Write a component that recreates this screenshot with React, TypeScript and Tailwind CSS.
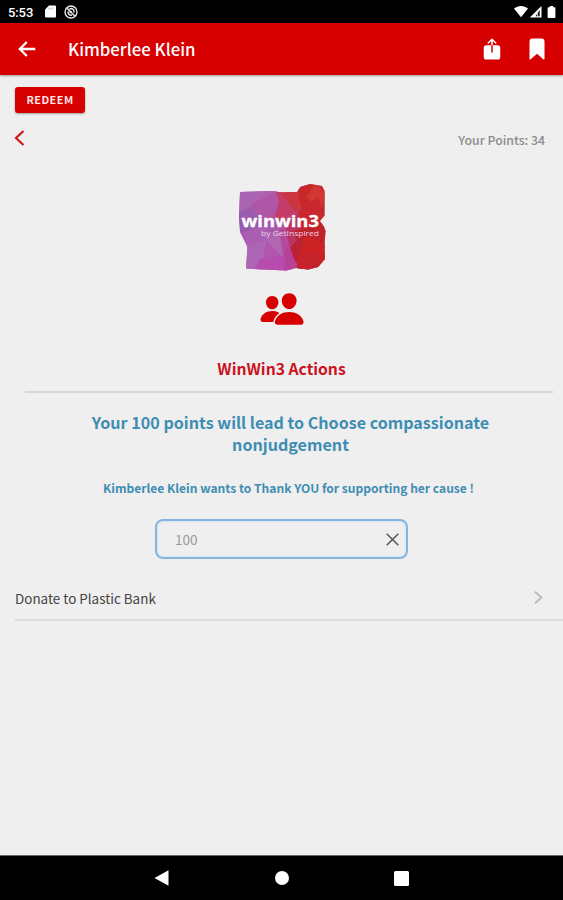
import React from 'react';
import { IoShare, IoBookmark, IoPeople } from 'react-icons/io5';

function StatusBar() {
  return (
    <div className="flex h-[23px] shrink-0 items-center bg-black pl-2 pr-[7px] text-white">
      <span className="mt-px w-[26px] whitespace-nowrap font-[Roboto] text-[13px] leading-none font-medium tracking-[-0.1px]">5:53</span>
      <svg className="ml-[11px]" width="11" height="13" viewBox="0 0 11 13">
        <path d="M4 0.5h6a1 1 0 0 1 1 1v10a1 1 0 0 1-1 1H1a1 1 0 0 1-1-1V4.5z" fill="#fff" />
        <path d="M4 2.5v2M6 2.5v2M8 2.5v2" stroke="#999" strokeWidth="0.7" />
      </svg>
      <svg className="ml-2" width="14" height="14" viewBox="0 0 14 14" fill="none" stroke="#eee">
        <circle cx="7" cy="7" r="6" strokeWidth="1.3" />
        <path d="M3 3.2l8 8M4 6.5c0 3 2 4 4 3.6M5.5 4c2.5-1.2 5 .5 4.5 3.5M5.5 7.5l2-1.5" strokeWidth="1.4" />
      </svg>
      <svg className="ml-auto" width="42" height="14" viewBox="0 0 42 14">
        <path d="M0 3.6C4 .2 10 .2 14 3.6L7 12.3z" fill="#fff" />
        <path d="M27.5 1v11.5H15.8z" fill="#fff" />
        <path d="M25.7 5v6.2h-4.2z" fill="#111" />
        <path d="M23.5 6.8v4.7" stroke="#ddd" strokeWidth="0.9" />
        <path d="M35.8 1h3.4v1.2h1.3a.9.9 0 0 1 .9.9v9a.9.9 0 0 1-.9.9h-6a.9.9 0 0 1-.9-.9v-9a.9.9 0 0 1 .9-.9h1.3z" fill="#fff" />
      </svg>
    </div>
  );
}

function Header() {
  return (
    <header className="z-10 flex h-[52px] shrink-0 items-center bg-[#d70000] pl-[18px] pr-[14px] text-white shadow-[0_1px_2px_rgba(0,0,0,0.35)]">
      <svg width="18" height="16" viewBox="0 0 18 16" fill="none" stroke="#fff" strokeWidth="2.3">
        <path d="M17.3 8H2M8.8 1L1.8 8l7 7" />
      </svg>
      <h1 className="ml-[32px] whitespace-nowrap text-[16.8px] leading-6 font-medium">Kimberlee Klein</h1>
      <IoShare className="ml-auto size-6" />
      <IoBookmark className="ml-[21px] size-6" />
    </header>
  );
}

function Logo() {
  return (
    <svg className="mx-auto mt-[33px] block" width="88" height="88" viewBox="0 0 88 88">
      <defs>
        <clipPath id="blob">
          <path d="M2 9L20 8.5L34 8L44 9.5L59 9L62 4L72 1L84 3L86.5 8V33L84 38L87.5 48L86.5 60L87 76L80 84L70 86.5L58 85L48 87.5L8 85.5L9.5 64L2 49L1 34z" />
        </clipPath>
      </defs>
      <g clipPath="url(#blob)">
        <path d="M0 0h88v88H0z" fill="#a85aac" />
        <path d="M0 8h22l-10 18-12 8z" fill="#a765b2" />
        <path d="M0 30l12-6 16 18-26 8z" fill="#9a5ab0" />
        <path d="M20 8h22l-14 18-15-4z" fill="#b061b4" />
        <path d="M37 8l8 15-17 19-15-20z" fill="#b056a6" />
        <path d="M6 50l22-8 8 16-26 10z" fill="#aa5fb2" />
        <path d="M28 57l19 18-23 13z" fill="#b255ac" />
        <path d="M8 64l20-7-4 31H0z" fill="#ad66b6" />
        <path d="M22 76l24-4 10 16H16z" fill="#b74bae" />
        <path d="M28 57l14-13 10 22-8 8z" fill="#b166b0" />
        <path d="M40 42h18l-2 26-10 8z" fill="#b34a9a" />
        <path d="M38 8h24l4 20-16 14-14-8 5-14z" fill="#c23d68" />
        <path d="M42 9h20l3 13-8 6z" fill="#c9363f" />
        <path d="M46 38l14-8 6 28-14 8z" fill="#b83566" />
        <path d="M48 64l12-6 4 30H46z" fill="#b8419a" />
        <path d="M60 8l5-8h23v38L64 30z" fill="#c9282b" />
        <path d="M68 14l10-14 10 12-6 16z" fill="#d23732" />
        <path d="M60 28l20-14 8 26-24 12z" fill="#c9282e" />
        <path d="M55 48l33-10v26l-24 6z" fill="#bf2229" />
        <path d="M52 64l12-12 12 18-12 18-8-12z" fill="#bb2236" />
        <path d="M66 52l22 10v26H60z" fill="#cc2222" />
        <path d="M60 72l14-4 14 14-8 8H58z" fill="#c4232c" />
      </g>
      <path d="M82 38l6-7v15z" fill="#efefef" />
      <text x="3.5" y="44" fill="#fff" stroke="#fff" strokeWidth="0.3" fontFamily="Open Sans" fontWeight="700" fontSize="16.5" textLength="77.5" lengthAdjust="spacingAndGlyphs">winwin3</text>
      <text x="23" y="53" fill="#edd3e4" fontFamily="Open Sans" fontSize="7.8" textLength="58" lengthAdjust="spacingAndGlyphs">by GetInspired</text>
    </svg>
  );
}

function PointsInput() {
  return (
    <div className="mx-auto mt-[21px] flex h-10 w-[253px] items-center justify-between rounded-[8px] border-2 border-[#86b4dc] pl-[18px] pr-[7px] shadow-[inset_0_0_0_1.5px_#dbe9f7]">
      <span className="pb-px text-[13.6px] leading-5 text-[#999]">100</span>
      <svg width="13" height="13" viewBox="0 0 13 13" stroke="#555" strokeWidth="1.5">
        <path d="M.7.7l11.6 11.6M12.3.7L.7 12.3" />
      </svg>
    </div>
  );
}

function NavBar() {
  return (
    <nav className="flex h-[45px] shrink-0 items-center justify-center gap-[105px] border-t border-[#666] bg-black">
      <svg width="16" height="18" viewBox="0 0 16 18"><path d="M.5 9L14.5 1.3v15.4z" fill="#fff" /></svg>
      <div className="size-[14px] rounded-full bg-white" />
      <div className="size-[15px] rounded-[1.5px] bg-white" />
    </nav>
  );
}

export default function App() {
  return (
    <div className="flex h-[900px] w-[563px] flex-col overflow-hidden bg-[#efefef] font-['Noto_Sans_CJK_SC',sans-serif]">
      <StatusBar />
      <Header />
      <main className="flex-1">
        <button className="ml-[15px] mt-3 flex h-[26px] w-[70px] items-center justify-center rounded-[3px] bg-[#d70000] pb-px text-[10.8px] font-bold tracking-[0.5px] text-[#ffe4e4] shadow-[0_1px_2px_rgba(0,0,0,0.35)]">
          REDEEM
        </button>
        <div className="mt-[17px] flex h-5 items-start justify-between pl-[14px] pr-[18px]">
          <svg width="11" height="16" viewBox="0 0 11 16" fill="none" stroke="#cf1717" strokeWidth="2.2">
            <path d="M9.5 1L2 8l7.5 7" />
          </svg>
          <span className="text-[12.3px] leading-5 font-medium text-[#8b8b8b]">Your Points: 34</span>
        </div>
        <Logo />
        <IoPeople className="mx-auto mt-[15px] size-[46px] text-[#d70000]" />
        <h2 className="mt-[25px] text-center text-[15.7px] leading-6 font-bold text-[#c91420]">WinWin3 Actions</h2>
        <div className="ml-[25px] mr-[10px] mt-[10px] h-[2px] bg-[#d6d6d6]" />
        <p className="mx-auto mt-[18px] w-[440px] pl-[18px] text-center text-[16.1px] leading-[22px] font-bold text-[#408db3]">
          Your 100 points will lead to Choose compassionate nonjudgement
        </p>
        <p className="mt-[23px] pl-[14px] text-center text-[12.05px] leading-5 font-bold text-[#408db3]">
          Kimberlee Klein wants to Thank YOU for supporting her cause !
        </p>
        <PointsInput />
        <div className="ml-[15px] mt-[29px] flex h-[33px] items-start justify-between border-b-2 border-[#dcdcdc] pr-5">
          <span className="text-[13.45px] leading-5 text-[#444]">Donate to Plastic Bank</span>
          <svg className="mt-[3px]" width="9" height="13" viewBox="0 0 9 13" fill="none" stroke="#b8b8b8" strokeWidth="1.8">
            <path d="M1 .8l6.5 5.7L1 12.2" />
          </svg>
        </div>
      </main>
      <NavBar />
    </div>
  );
}
